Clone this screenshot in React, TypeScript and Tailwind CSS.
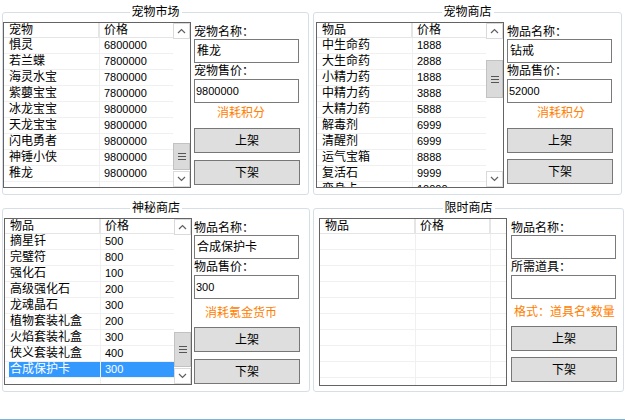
import React from 'react';

type Item = { name: string; price: string };

const FONT = "font-['Liberation_Sans','Noto_Sans_CJK_SC',sans-serif]";

const petMarket: Item[] = [
  { name: '惧灵', price: '6800000' },
  { name: '若兰蝶', price: '7800000' },
  { name: '海灵水宝', price: '7800000' },
  { name: '紫蘡宝宝', price: '7800000' },
  { name: '冰龙宝宝', price: '9800000' },
  { name: '天龙宝宝', price: '9800000' },
  { name: '闪电勇者', price: '9800000' },
  { name: '神锤小侠', price: '9800000' },
  { name: '稚龙', price: '9800000' },
];

const petShop: Item[] = [
  { name: '中生命药', price: '1888' },
  { name: '大生命药', price: '2888' },
  { name: '小精力药', price: '1888' },
  { name: '中精力药', price: '3888' },
  { name: '大精力药', price: '5888' },
  { name: '解毒剂', price: '6999' },
  { name: '清醒剂', price: '6999' },
  { name: '运气宝箱', price: '8888' },
  { name: '复活石', price: '9999' },
  { name: '变身卡', price: '10000' },
];

const mystery: Item[] = [
  { name: '摘星钎', price: '500' },
  { name: '完璧符', price: '800' },
  { name: '强化石', price: '100' },
  { name: '高级强化石', price: '200' },
  { name: '龙魂晶石', price: '300' },
  { name: '植物套装礼盒', price: '200' },
  { name: '火焰套装礼盒', price: '300' },
  { name: '侠义套装礼盒', price: '400' },
  { name: '合成保护卡', price: '300' },
];

function Chevron({ up }: { up?: boolean }) {
  return (
    <svg width="9" height="6" viewBox="0 0 9 6">
      <polyline
        points={up ? '1,5 4.5,1.5 8,5' : '1,1 4.5,4.5 8,1'}
        fill="none"
        stroke="#606060"
        strokeWidth="1.2"
      />
    </svg>
  );
}

function ScrollBar({ top, h }: { top: number; h: number }) {
  return (
    <div className="flex w-[17px] shrink-0 flex-col bg-white">
      <div className="flex h-[16px] shrink-0 items-center justify-center border border-[#dadada]">
        <Chevron up />
      </div>
      <div className="min-h-0 flex-1">
        <div
          className="flex flex-col items-center justify-center gap-[2px] border border-[#c2c2c2] bg-[#dadada]"
          style={{ marginTop: top, height: h }}
        >
          <span className="h-px w-[8px] bg-[#555]" />
          <span className="h-px w-[8px] bg-[#555]" />
          <span className="h-px w-[8px] bg-[#555]" />
        </div>
      </div>
      <div className="flex h-[16px] shrink-0 items-center justify-center border border-[#dadada]">
        <Chevron />
      </div>
    </div>
  );
}

function ListView({
  box,
  head,
  items,
  selected = -1,
  thumb,
  third = false,
}: {
  box: string;
  head: [string, string];
  items: Item[];
  selected?: number;
  thumb?: [number, number];
  third?: boolean;
}) {
  const rows = [...items];
  while (rows.length < 11) rows.push({ name: '', price: '' });

  return (
    <div className={`flex shrink-0 overflow-hidden border border-[#646464] bg-white ${box}`}>
      <div className="min-w-0 flex-1 overflow-hidden">
        <div className="flex h-[15px] border-b border-[#e5e5e5] text-[12px] leading-[14px] text-black">
          <div className="w-[96px] shrink-0 border-r-2 border-[#e5e5e5] pl-[5px]">{head[0]}</div>
          <div className={third ? 'w-[75px] shrink-0 border-r-2 border-[#e5e5e5] pl-[4px]' : 'flex-1 pl-[4px]'}>
            {head[1]}
          </div>
        </div>
        {rows.map((r, i) => {
          const sel = i === selected;
          return (
            <div key={i} className="flex h-[16px] border-b border-[#f0f0f0] leading-[15px]">
              <div className="w-[96px] shrink-0 border-r border-[#f0f0f0] pl-[4px]">
                <div className={`h-full whitespace-nowrap pl-px text-[12px] ${sel ? 'bg-[#3399ff] text-white' : 'text-black'}`}>
                  {r.name}
                </div>
              </div>
              <div
                className={`pl-[4px] text-[11px] ${sel ? 'bg-[#3399ff] text-white' : 'text-black'} ${
                  third ? 'w-[75px] shrink-0 border-r border-[#f0f0f0]' : 'flex-1'
                }`}
              >
                {r.price}
              </div>
            </div>
          );
        })}
      </div>
      {thumb && <ScrollBar top={thumb[0]} h={thumb[1]} />}
    </div>
  );
}

function Controls({
  l1,
  v1,
  l2,
  v2,
  hint,
  hintCls,
  hintMt,
  b1Mt,
  b2Mt,
}: {
  l1: string;
  v1: string;
  l2: string;
  v2: string;
  hint: string;
  hintCls: string;
  hintMt: string;
  b1Mt: string;
  b2Mt: string;
}) {
  return (
    <div className="flex w-[106px] shrink-0 flex-col text-[12px] text-black">
      <div className="mt-[3px] h-[14px] whitespace-nowrap leading-[14px]">{l1}</div>
      <div className="flex h-[24px] w-[105px] items-center border border-[#7a7a7a] bg-white pl-[2px] text-[12px]">
        {v1}
      </div>
      <div className="mt-px h-[14px] whitespace-nowrap leading-[14px]">{l2}</div>
      <div className="mt-px flex h-[24px] w-[105px] items-center border border-[#7a7a7a] bg-white pl-px text-[11px]">
        {v2}
      </div>
      <div className={`h-[16px] whitespace-nowrap leading-[16px] text-[#ff8000] ${hintMt} ${hintCls}`}>{hint}</div>
      <button className={`h-[25px] w-[106px] border border-[#777] bg-[#dedede] text-[12px] text-black ${b1Mt}`}>
        上架
      </button>
      <button className={`h-[25px] w-[106px] border border-[#777] bg-[#dedede] text-[12px] text-black ${b2Mt}`}>
        下架
      </button>
    </div>
  );
}

function Group({
  title,
  box,
  pad,
  children,
}: {
  title: string;
  box: string;
  pad: string;
  children: React.ReactNode;
}) {
  return (
    <div className={`relative shrink-0 rounded-[3px] border border-[#d5dfe5] ${box}`}>
      <div className="absolute left-1/2 top-[-8px] -translate-x-1/2 whitespace-nowrap bg-white px-[2px] text-[12px] leading-[14px] text-black">
        {title}
      </div>
      <div className={`flex pt-[9px] ${pad}`}>{children}</div>
    </div>
  );
}

export default function App() {
  return (
    <div className={`flex h-[420px] w-[625px] flex-col overflow-hidden bg-white ${FONT}`}>
      <div className="flex flex-1 flex-col gap-[13px] pl-[2px] pt-[12px]">
        <div className="flex gap-[4px]">
          <Group title="宠物市场" box="w-[307px] h-[183px]" pad="gap-[3px]">
            <ListView box="w-[188px] h-[166px]" head={['宠物', '价格']} items={petMarket} thumb={[104, 27]} />
            <Controls
              l1="宠物名称："
              v1="稚龙"
              l2="宠物售价："
              v2="9800000"
              hint="消耗积分"
              hintCls="pl-[23px]"
              hintMt="mt-[2px]"
              b1Mt="mt-[7px]"
              b2Mt="mt-[7px]"
            />
          </Group>
          <Group title="宠物商店" box="w-[309px] h-[183px]" pad="pl-[2px] gap-[3px]">
            <ListView box="w-[188px] h-[166px]" head={['物品', '价格']} items={petShop} thumb={[21, 38]} />
            <Controls
              l1="物品名称："
              v1="钻戒"
              l2="物品售价："
              v2="52000"
              hint="消耗积分"
              hintCls="pl-[30px]"
              hintMt="mt-[2px]"
              b1Mt="mt-[7px]"
              b2Mt="mt-[6px]"
            />
          </Group>
        </div>
        <div className="flex gap-[3px]">
          <Group title="神秘商店" box="w-[308px] h-[184px]" pad="pl-px gap-[2px]">
            <ListView
              box="w-[188px] h-[167px]"
              head={['物品', '价格']}
              items={mystery}
              selected={8}
              thumb={[97, 35]}
            />
            <Controls
              l1="物品名称："
              v1="合成保护卡"
              l2="物品售价："
              v2="300"
              hint="消耗氪金货币"
              hintCls="pl-[11px]"
              hintMt="mt-[6px]"
              b1Mt="mt-[6px]"
              b2Mt="mt-[7px]"
            />
          </Group>
          <Group title="限时商店" box="w-[311px] h-[184px]" pad="pl-[5px] gap-[4px]">
            <ListView box="w-[188px] h-[168px]" head={['物品', '价格']} items={[]} third />
            <Controls
              l1="物品名称："
              v1=""
              l2="所需道具："
              v2=""
              hint="格式：道具名*数量"
              hintCls="pl-[3px]"
              hintMt="mt-[5px]"
              b1Mt="mt-[6px]"
              b2Mt="mt-[6px]"
            />
          </Group>
        </div>
      </div>
      <div className="h-px shrink-0 bg-[#7fb3d5]" />
    </div>
  );
}
